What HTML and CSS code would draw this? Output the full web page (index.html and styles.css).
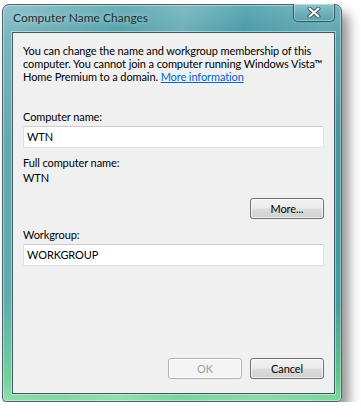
FILE: index.html
```html
<!DOCTYPE html>
<html>
<head>
<meta charset="utf-8">
<link rel="stylesheet" href="styles.css">
</head>
<body>
<div class="window">
  <div class="titlebar">
    <span class="title">Computer Name Changes</span>
    <div class="close">
      <svg width="14" height="11" viewBox="0 0 14 11">
        <path d="M2.5 1.5 L11.5 9.5 M11.5 1.5 L2.5 9.5" stroke="#3c5a60" stroke-width="4" stroke-linecap="round"/>
        <path d="M2.5 1.5 L11.5 9.5 M11.5 1.5 L2.5 9.5" stroke="#ffffff" stroke-width="2" stroke-linecap="round"/>
      </svg>
    </div>
  </div>
  <div class="panel">
    <p class="intro">You can change the name and workgroup membership of this<br>computer. You cannot join a computer running Windows Vista™<br>Home Premium to a domain. <a href="#" class="link">More information</a></p>
    <div class="label first">Computer name:</div>
    <div class="field">WTN</div>
    <div class="label">Full computer name:</div>
    <div class="value">WTN</div>
    <div class="row more-row"><button class="btn">More...</button></div>
    <div class="label wg">Workgroup:</div>
    <div class="field">WORKGROUP</div>
    <div class="row footer">
      <button class="btn disabled">OK</button>
      <button class="btn">Cancel</button>
    </div>
  </div>
</div>
</body>
</html>
```

FILE: styles.css
```css
html, body {
  margin: 0;
  padding: 0;
  background: #ffffff;
}
body {
  font-family: Lato, "Liberation Sans", sans-serif;
  font-size: 11px;
  letter-spacing: -0.1px;
  color: #000;
}
.window {
  box-sizing: border-box;
  margin: 4px 0 0 2px;
  width: 340px;
  height: 398px;
  border: 1px solid #4b6468;
  border-radius: 7px 7px 4px 4px;
  padding: 0 6px 7px 9px;
  display: flex;
  flex-direction: column;
  background:
    linear-gradient(100deg, rgba(255,255,255,0.3) 0%, rgba(255,255,255,0.06) 30%, rgba(255,255,255,0.2) 45%, rgba(255,255,255,0) 60%, rgba(255,255,255,0.14) 80%, rgba(255,255,255,0) 100%),
    linear-gradient(to bottom, #62abb5 0%, #4599a5 8%, #358a98 35%, #3b9a9a 75%, #5bc48b 94%, #7fd79f 100%);
  box-shadow: 7px 9px 12px rgba(0,0,0,0.42), 0 0 0 1px rgba(255,255,255,0.4) inset;
}
.titlebar {
  height: 27px;
  display: flex;
  justify-content: space-between;
  align-items: flex-start;
}
.title {
  padding: 6px 0 0 1px;
  font-size: 12px;
  letter-spacing: 0;
  line-height: 14px;
  color: #1f2f33;
  text-shadow: 0 0 6px rgba(255,255,255,0.7);
}
.close {
  box-sizing: border-box;
  width: 42px;
  height: 18px;
  margin-top: -1px;
  border: 1px solid #34575d;
  border-top: none;
  border-radius: 0 0 5px 5px;
  background: linear-gradient(to bottom, #8cc5cc 0%, #6fb1ba 50%, #5aa2ac 100%);
  box-shadow: 0 0 0 1px rgba(255,255,255,0.35) inset;
  display: flex;
  align-items: center;
  justify-content: center;
}
.panel {
  box-sizing: border-box;
  height: 362px;
  background: #f0f0f0;
  border: 1px solid #3d5b60;
  box-shadow: 0 0 0 1px rgba(255,255,255,0.45);
  padding: 11px 10px 14px 10px;
  display: flex;
  flex-direction: column;
}
.intro {
  margin: 0;
  line-height: 13px;
  white-space: nowrap;
}
.link {
  color: #0066cc;
  text-decoration: underline;
}
.label {
  line-height: 13px;
  margin-top: 8px;
}
.label.first {
  margin-top: 27px;
}
.label.wg {
  margin-top: 9px;
}
.value {
  line-height: 13px;
  margin-top: 2px;
}
.field {
  box-sizing: border-box;
  height: 22px;
  margin-top: 3px;
  background: #ffffff;
  border: 1px solid #dcdfe3;
  border-top-color: #c9cdd1;
  border-radius: 2px;
  padding: 0 3px;
  line-height: 20px;
}
.row {
  display: flex;
  justify-content: flex-end;
  gap: 8px;
}
.more-row {
  margin-top: 14px;
}
.footer {
  margin-top: auto;
}
.btn {
  box-sizing: border-box;
  width: 74px;
  height: 21px;
  font-family: inherit;
  font-size: 11px;
  letter-spacing: -0.1px;
  color: #000;
  border: 1px solid #707070;
  border-radius: 3px;
  padding: 0;
  background: linear-gradient(to bottom, #f2f2f2 0%, #ebebeb 48%, #dddddd 52%, #cfcfcf 100%);
  box-shadow: 0 0 0 1px rgba(255,255,255,0.7) inset;
}
.btn.disabled {
  color: #a0a0a0;
  border-color: #adb2b5;
  background: #f4f4f4;
}
```
